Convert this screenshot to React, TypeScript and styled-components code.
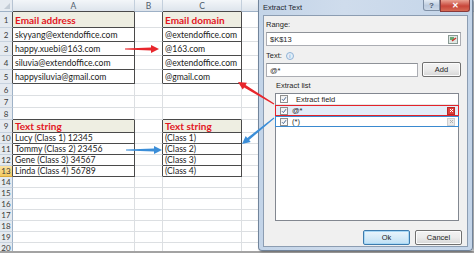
import React from 'react';
import styled, { createGlobalStyle } from 'styled-components';

const GlobalStyle = createGlobalStyle`
  html, body {
    margin: 0;
    padding: 0;
    background: #fff;
  }
  body {
    width: 474px;
    height: 253px;
    overflow: hidden;
  }
`;

const Screen = styled.div`
  position: relative;
  width: 474px;
  height: 253px;
  overflow: hidden;
  display: flex;
  flex-direction: column;
  font-family: Lato, 'Liberation Sans', sans-serif;
`;

const ROW_HEIGHTS = [12, 16, 14, 14, 14, 14, 12, 12, 12, 13, 11, 11, 11, 11, 11, 11, 11, 11, 11, 11, 11];

const Sheet = styled.div`
  flex: 1;
  min-height: 0;
  overflow: hidden;
  display: grid;
  grid-template-columns: 13px 122px 28px 79px 1fr;
  grid-template-rows: ${ROW_HEIGHTS.map((h) => `${h}px`).join(' ')};
`;

const Corner = styled.div`
  position: relative;
  background: #e6ebf1;
  border-right: 1px solid #b6c3d2;
  border-bottom: 1px solid #9eb1c6;

  &::after {
    content: '';
    position: absolute;
    right: 2px;
    bottom: 2px;
    border-left: 6px solid transparent;
    border-bottom: 6px solid #c3ccd6;
  }
`;

const ColHead = styled.div<{ $darkBottom: boolean }>`
  display: flex;
  align-items: center;
  justify-content: center;
  background: linear-gradient(#f3f6f9, #dde4ec);
  border-right: 1px solid #c3cfdc;
  border-bottom: 1px solid ${(p) => (p.$darkBottom ? '#4a4a4a' : '#9eb1c6')};
  color: #4f5d6c;
  font-size: 8.5px;
`;

const RowHead = styled.div<{ $darkRight: boolean; $active: boolean }>`
  display: flex;
  align-items: center;
  justify-content: center;
  background: ${(p) => (p.$active ? 'linear-gradient(#fbe3a3, #f2c95f)' : '#e5eaf0')};
  border-right: 1px solid ${(p) => (p.$darkRight ? '#4a4a4a' : '#9eb1c6')};
  border-bottom: 1px solid ${(p) => (p.$active ? '#d9a93c' : '#c7d2de')};
  color: #3a3a3a;
  font-size: 8px;
`;

const Cell = styled.div<{ $darkRight: boolean; $darkBottom: boolean; $head: boolean }>`
  display: flex;
  align-items: center;
  padding-left: 2px;
  overflow: hidden;
  white-space: nowrap;
  background: ${(p) => (p.$head ? '#eeeee2' : '#fff')};
  border-right: 1px solid ${(p) => (p.$darkRight ? '#4a4a4a' : '#dcdfe2')};
  border-bottom: 1px solid ${(p) => (p.$darkBottom ? '#4a4a4a' : '#dcdfe2')};
  color: ${(p) => (p.$head ? '#e3161e' : '#1a1a1a')};
  font-size: ${(p) => (p.$head ? '10px' : '8.6px')};
  font-weight: ${(p) => (p.$head ? 700 : 400)};
`;

const BottomBar = styled.div`
  height: 2px;
  background: #a3a3a3;
`;

const Window = styled.div`
  position: absolute;
  left: 258px;
  top: 0;
  width: 215px;
  height: 251px;
  box-sizing: border-box;
  display: flex;
  flex-direction: column;
  padding: 0 4px 3px 4px;
  background: linear-gradient(90deg, #c3d4e8, #cfdcec 40%, #c4d5e9);
  border: 1px solid #71849b;
  border-top: none;
  border-radius: 0 0 4px 4px;
  box-shadow: 1px 1px 2px rgba(0, 0, 0, 0.35);
  z-index: 2;
`;

const TitleBar = styled.div`
  height: 15px;
  display: flex;
  align-items: flex-start;
  justify-content: space-between;
  margin-right: -2px;
`;

const Title = styled.span`
  margin-top: 3px;
  font-family: 'Liberation Sans', sans-serif;
  font-size: 7.5px;
  color: #1e2630;
`;

const Caption = styled.div`
  display: flex;
`;

const CaptionButton = styled.div<{ $close?: boolean }>`
  width: ${(p) => (p.$close ? '30px' : '17px')};
  height: ${(p) => (p.$close ? '12px' : '11px')};
  display: flex;
  align-items: center;
  justify-content: center;
  box-sizing: border-box;
  border: 1px solid ${(p) => (p.$close ? '#8a3a3a' : '#7f90a6')};
  border-top: none;
  border-radius: ${(p) => (p.$close ? '0 0 3px 0' : '0 0 0 3px')};
  background: ${(p) =>
    p.$close ? 'linear-gradient(#e9a293, #c8463a 55%, #d66a55)' : 'linear-gradient(#e4ecf5, #bccbde 55%, #cbd8e8)'};
  color: ${(p) => (p.$close ? '#fff' : '#4a5a70')};
  font-family: 'Liberation Sans', sans-serif;
  font-size: 8px;
  font-weight: 700;
`;

const Client = styled.div`
  flex: 1;
  display: flex;
  flex-direction: column;
  padding: 0 6px 0 2px;
  background: #f0f0f0;
  border: 1px solid #8c9db2;
  font-family: 'Liberation Sans', sans-serif;
  font-size: 7.5px;
  color: #1e1e1e;
`;

const Label = styled.div<{ $top: number; $indent?: number }>`
  height: 8px;
  line-height: 8px;
  margin-top: ${(p) => p.$top}px;
  margin-left: ${(p) => p.$indent || 0}px;
  display: flex;
  align-items: center;
  gap: 4px;
`;

const InfoDot = styled.span`
  width: 6px;
  height: 6px;
  border-radius: 50%;
  border: 1px solid #8fb2d6;
  background: #e4eef8;
  color: #5b8dc2;
  font-size: 5px;
  line-height: 6px;
  text-align: center;
`;

const Input = styled.div<{ $top: number }>`
  flex: 1;
  height: 14px;
  margin-top: ${(p) => p.$top}px;
  box-sizing: border-box;
  display: flex;
  align-items: center;
  justify-content: space-between;
  padding: 0 2px 0 3px;
  background: #fff;
  border: 1px solid #abadb3;
  border-top-color: #8e9298;
`;

const InputRow = styled.div`
  display: flex;
  align-items: flex-start;
  gap: 4px;
`;

const Button = styled.div<{ $width: number; $default?: boolean }>`
  width: ${(p) => p.$width}px;
  height: 15px;
  box-sizing: border-box;
  display: flex;
  align-items: center;
  justify-content: center;
  border: 1px solid ${(p) => (p.$default ? '#3d7bad' : '#707070')};
  border-radius: 2px;
  background: ${(p) =>
    p.$default ? 'linear-gradient(#eaf5fc, #d6ebf8 50%, #bfe0f5)' : 'linear-gradient(#f3f3f3, #ebebeb 50%, #d6d6d6)'};
  box-shadow: inset 0 0 0 1px ${(p) => (p.$default ? '#a8d8f5' : '#fcfcfc')};
`;

const ListBox = styled.div`
  height: 128px;
  margin: 3px 2px 0 9px;
  box-sizing: border-box;
  background: #fff;
  border: 1px solid #828790;
  display: flex;
  flex-direction: column;
`;

const ListRow = styled.div<{ $frame?: string; $selected?: boolean; $textPad: number }>`
  height: 11px;
  box-sizing: border-box;
  display: flex;
  align-items: center;
  padding: 0 3px 0 4px;
  gap: ${(p) => p.$textPad}px;
  background: ${(p) => (p.$selected ? '#e3edf8' : '#fff')};
  border: ${(p) => (p.$frame ? `1.5px solid ${p.$frame}` : 'none')};
  border-bottom: ${(p) => (p.$frame ? `1.5px solid ${p.$frame}` : '1px solid #e6e6e6')};
  margin: ${(p) => (p.$frame ? '0 -1px' : '0')};
`;

const RowText = styled.span`
  flex: 1;
`;

const Check = styled.span`
  width: 6px;
  height: 6px;
  border: 1px solid #8e8f8f;
  background: linear-gradient(#f0f0f0, #fdfdfd);
  display: flex;
  align-items: center;
  justify-content: center;
`;

const DeleteMark = styled.span<{ $active?: boolean }>`
  width: 6px;
  height: 6px;
  display: flex;
  align-items: center;
  justify-content: center;
  background: ${(p) => (p.$active ? '#e0403c' : '#e9e9e9')};
  border: 1px solid ${(p) => (p.$active ? '#b52a26' : '#cfcfcf')};
`;

const Footer = styled.div`
  display: flex;
  justify-content: flex-end;
  gap: 5px;
  margin-top: 9px;
  margin-right: -1px;
`;

const Overlay = styled.svg`
  position: absolute;
  left: 0;
  top: 0;
  z-index: 3;
  pointer-events: none;
`;

const inBlock = (r: number, c: number) => (c === 1 || c === 3) && ((r >= 1 && r <= 5) || (r >= 9 && r <= 13));

const DATA: Record<string, string> = {
  '1-1': 'Email address',
  '2-1': 'skyyang@extendoffice.com',
  '3-1': 'happy.xuebi@163.com',
  '4-1': 'siluvia@extendoffice.com',
  '5-1': 'happysiluvia@gmail.com',
  '1-3': 'Email domain',
  '2-3': '@extendoffice.com',
  '3-3': '@163.com',
  '4-3': '@extendoffice.com',
  '5-3': '@gmail.com',
  '9-1': 'Text string',
  '10-1': 'Lucy (Class 1) 12345',
  '11-1': 'Tommy (Class 2) 23456',
  '12-1': 'Gene (Class 3) 34567',
  '13-1': 'Linda (Class 4) 56789',
  '9-3': 'Text string',
  '10-3': '(Class 1)',
  '11-3': '(Class 2)',
  '12-3': '(Class 3)',
  '13-3': '(Class 4)',
};

const LETTERS = ['', 'A', 'B', 'C', 'D'];

const arrowPoints = (x1: number, y1: number, x2: number, y2: number) => {
  const dx = x2 - x1;
  const dy = y2 - y1;
  const len = Math.hypot(dx, dy);
  const ux = dx / len;
  const uy = dy / len;
  const nx = -uy;
  const ny = ux;
  const head = 8;
  const bx = x2 - ux * head;
  const by = y2 - uy * head;
  const pts: [number, number][] = [
    [x1 + nx * 0.5, y1 + ny * 0.5],
    [bx + nx * 1.4, by + ny * 1.4],
    [bx + nx * 4, by + ny * 4],
    [x2, y2],
    [bx - nx * 4, by - ny * 4],
    [bx - nx * 1.4, by - ny * 1.4],
    [x1 - nx * 0.5, y1 - ny * 0.5],
  ];
  return pts.map((p) => p.map((v) => v.toFixed(1)).join(',')).join(' ');
};

const CheckTick = () => (
  <svg width="6" height="6" viewBox="0 0 6 6">
    <path d="M1 3.2 L2.4 4.6 L5 1.2" fill="none" stroke="#4a6a94" strokeWidth="1" />
  </svg>
);

const Cross = ({ color }: { color: string }) => (
  <svg width="5" height="5" viewBox="0 0 5 5">
    <path d="M1 1 L4 4 M4 1 L1 4" stroke={color} strokeWidth="1" />
  </svg>
);

const RangeIcon = () => (
  <svg width="10" height="9" viewBox="0 0 10 9">
    <rect x="0.5" y="0.5" width="9" height="8" fill="#dfe8e4" stroke="#8a9a94" />
    <rect x="2" y="2" width="4" height="3" fill="#6aa772" />
    <path d="M4 6 L8 3" stroke="#d0342c" strokeWidth="1.5" />
  </svg>
);

const App: React.FC = () => {
  const cells: React.ReactNode[] = [];
  for (let r = 0; r < ROW_HEIGHTS.length; r++) {
    for (let c = 0; c < 5; c++) {
      const key = `${r}-${c}`;
      if (r === 0 && c === 0) {
        cells.push(<Corner key={key} />);
      } else if (r === 0) {
        cells.push(
          <ColHead key={key} $darkBottom={inBlock(1, c)}>
            {LETTERS[c]}
          </ColHead>
        );
      } else if (c === 0) {
        cells.push(
          <RowHead key={key} $darkRight={inBlock(r, 1)} $active={r === 13}>
            {r}
          </RowHead>
        );
      } else {
        cells.push(
          <Cell
            key={key}
            $darkRight={inBlock(r, c) || inBlock(r, c + 1)}
            $darkBottom={inBlock(r, c) || inBlock(r + 1, c)}
            $head={(r === 1 || r === 9) && inBlock(r, c)}
          >
            {DATA[key]}
          </Cell>
        );
      }
    }
  }

  return (
    <Screen>
      <GlobalStyle />
      <Sheet>{cells}</Sheet>
      <BottomBar />

      <Window>
        <TitleBar>
          <Title>Extract Text</Title>
          <Caption>
            <CaptionButton>?</CaptionButton>
            <CaptionButton $close>✕</CaptionButton>
          </Caption>
        </TitleBar>
        <Client>
          <Label $top={5}>Range:</Label>
          <InputRow>
            <Input $top={3}>
              <span>$K$13</span>
              <RangeIcon />
            </Input>
          </InputRow>
          <Label $top={6}>
            Text:
            <InfoDot>i</InfoDot>
          </Label>
          <InputRow>
            <Input $top={3}>
              <span>@*</span>
            </Input>
            <Button $width={39} style={{ marginTop: 2 }}>
              Add
            </Button>
          </InputRow>
          <Label $top={5} $indent={10}>
            Extract list
          </Label>
          <ListBox>
            <ListRow $textPad={8}>
              <Check>
                <CheckTick />
              </Check>
              <RowText>Extract field</RowText>
            </ListRow>
            <ListRow $frame="#e3232b" $selected $textPad={4}>
              <Check>
                <CheckTick />
              </Check>
              <RowText>@*</RowText>
              <DeleteMark $active>
                <Cross color="#fff" />
              </DeleteMark>
            </ListRow>
            <ListRow $frame="#3a8ad0" $textPad={4}>
              <Check>
                <CheckTick />
              </Check>
              <RowText>(*)</RowText>
              <DeleteMark>
                <Cross color="#b0b0b0" />
              </DeleteMark>
            </ListRow>
          </ListBox>
          <Footer>
            <Button $width={47} $default>
              Ok
            </Button>
            <Button $width={47}>Cancel</Button>
          </Footer>
        </Client>
      </Window>

      <Overlay width="474" height="253">
        <polygon points={arrowPoints(125, 49, 159, 49)} fill="#e8262c" />
        <polygon points={arrowPoints(274, 104, 238, 82)} fill="#e8262c" />
        <polygon points={arrowPoints(126, 150, 162, 150)} fill="#3b8ed8" />
        <polygon points={arrowPoints(274, 118, 242, 144)} fill="#3b8ed8" />
      </Overlay>
    </Screen>
  );
};

export default App;
